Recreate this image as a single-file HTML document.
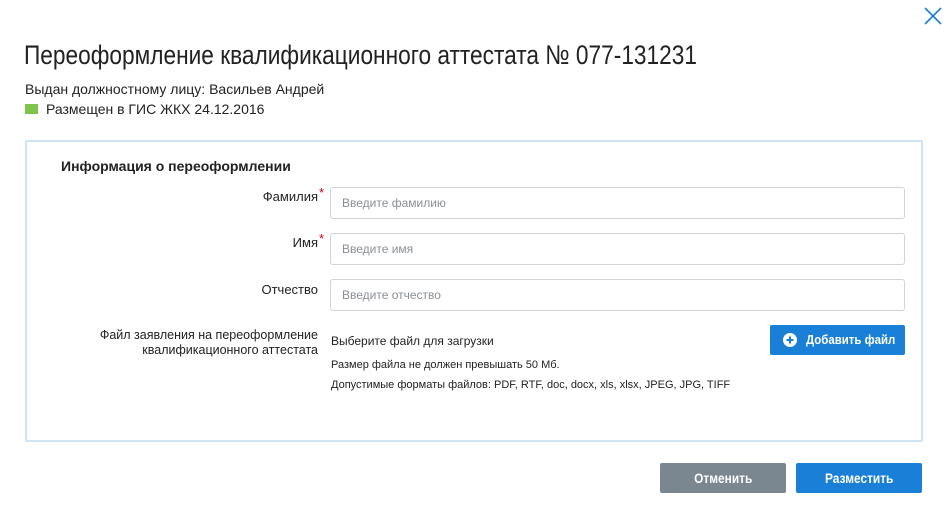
<!DOCTYPE html>
<html><head><meta charset="utf-8"><style>
body{margin:0;width:947px;height:510px;background:#fff;font-family:"Liberation Sans",sans-serif;color:#222;position:relative;overflow:hidden}
.a{position:absolute;white-space:nowrap}
.c{display:inline-block;transform-origin:left center}
.inp{position:absolute;left:330px;width:573px;height:30px;border:1px solid #cfd4d8;border-radius:3px;font-size:12px;color:#8a8f94;line-height:30px;box-sizing:content-box}
.inp span{margin-left:11px}
.lbl{position:absolute;right:629px;font-size:13px;text-align:right;color:#222}
.st{color:#d0021b;font-size:13px;position:absolute;top:-4px;left:100%;margin-left:1px}
.btn{position:absolute;color:#fff;font-size:14px;text-align:center;border-radius:2px}
</style></head><body>
<svg class="a" style="left:924px;top:7px" width="18" height="18" viewBox="0 0 18 18"><path d="M1 1L17 17M17 1L1 17" stroke="#1a7fd6" stroke-width="1.6" fill="none"/></svg>
<div class="a" style="left:24px;top:40px;font-size:27px;"><span class="c" style="transform:scaleX(0.84)">Переоформление квалификационного аттестата № 077-131231</span></div>
<div class="a" style="left:25px;top:81px;font-size:14px"><span class="c">Выдан должностному лицу: Васильев Андрей</span></div>
<div class="a" style="left:25px;top:104px;width:13px;height:10px;background:#7ec34a"></div>
<div class="a" style="left:46px;top:101px;font-size:14px"><span class="c">Размещен в ГИС ЖКХ 24.12.2016</span></div>
<div class="a" style="left:25px;top:140px;width:894px;height:298px;border:2px solid #cfe3f5;border-radius:2px"></div>
<div class="a" style="left:61px;top:158px;font-size:14px;font-weight:bold"><span class="c">Информация о переоформлении</span></div>
<div class="lbl" style="top:189px"><span style="position:relative">Фамилия<span class="st">*</span></span></div>
<div class="inp" style="top:187px"><span>Введите фамилию</span></div>
<div class="lbl" style="top:235px"><span style="position:relative">Имя<span class="st">*</span></span></div>
<div class="inp" style="top:233px"><span>Введите имя</span></div>
<div class="lbl" style="top:282px">Отчество</div>
<div class="lbl" style="top:328px;line-height:15px;font-size:12.5px">Файл заявления на переоформление<br>квалификационного аттестата</div>
<div class="inp" style="top:279px"><span>Введите отчество</span></div>
<div class="a" style="left:331px;top:334px;font-size:12px">Выберите файл для загрузки</div>
<div class="a" style="left:331px;top:359px;font-size:11px">Размер файла не должен превышать 50 Мб.</div>
<div class="a" style="left:331px;top:379px;font-size:11px">Допустимые форматы файлов: PDF, RTF, doc, docx, xls, xlsx, JPEG, JPG, TIFF</div>
<div class="a" style="left:770px;top:325px;width:135px;height:30px;background:#1a7fd6;border-radius:2px"></div>
<svg class="a" style="left:783px;top:333px" width="14" height="14" viewBox="0 0 14 14"><circle cx="7" cy="7" r="7" fill="#fff"/><path d="M7 3.5V10.5M3.5 7H10.5" stroke="#1a7fd6" stroke-width="2"/></svg>
<div class="a" style="left:806px;top:325px;line-height:30px;color:#fff;font-size:13px;font-weight:bold"><span class="c" style="transform:scaleX(0.88)">Добавить файл</span></div>
<div class="btn" style="left:660px;top:463px;width:126px;height:30px;line-height:30px;background:#7a8791;font-weight:bold"><span class="c" style="transform:scaleX(0.85);transform-origin:center">Отменить</span></div>
<div class="btn" style="left:796px;top:463px;width:126px;height:30px;line-height:30px;background:#1a7fd6;font-weight:bold"><span class="c" style="transform:scaleX(0.85);transform-origin:center">Разместить</span></div>
</body></html>
